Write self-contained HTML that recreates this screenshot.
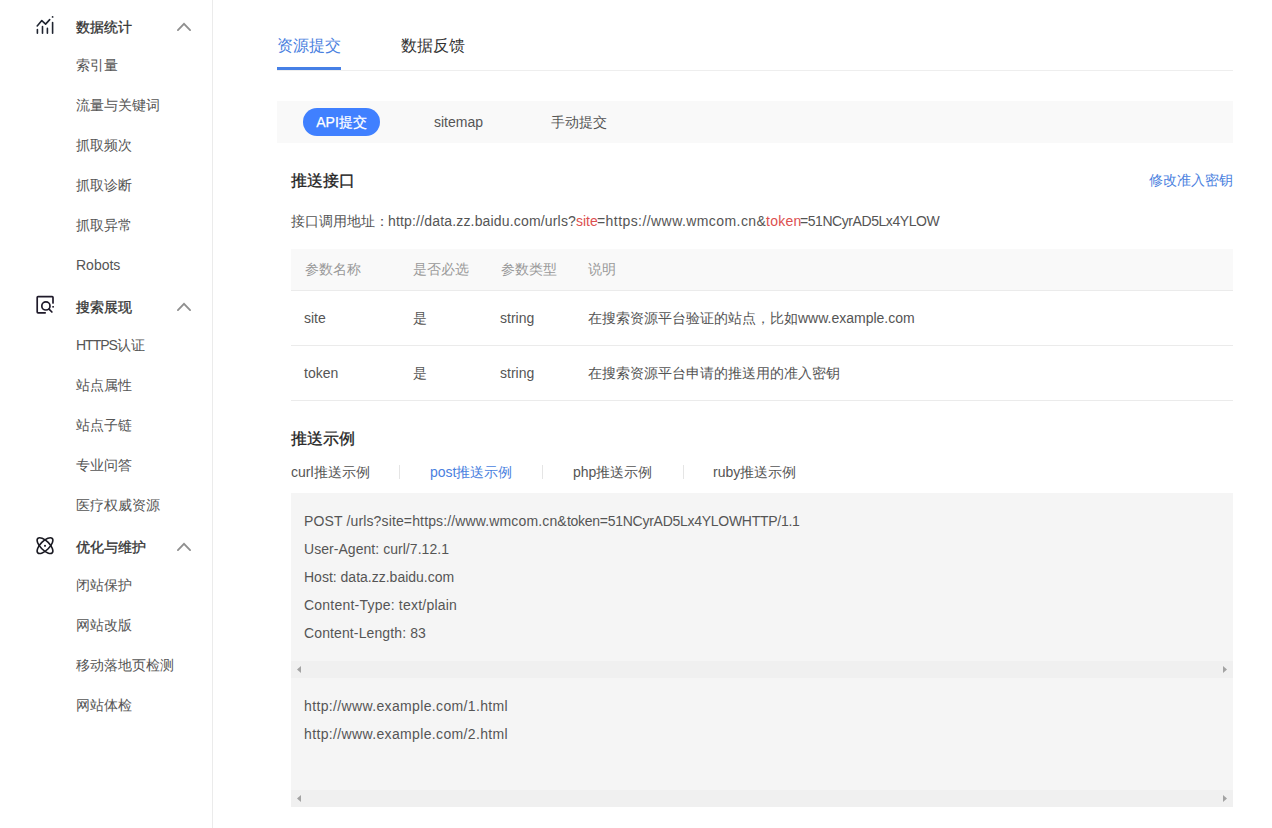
<!DOCTYPE html>
<html><head><meta charset="utf-8">
<style>
*{margin:0;padding:0;box-sizing:border-box}
html,body{width:1272px;height:828px;overflow:hidden;background:#fff}
body{font-family:"Liberation Sans",sans-serif;font-size:14px;color:#333;position:relative}
.abs{position:absolute;white-space:nowrap}
.side{position:absolute;left:0;top:0;width:213px;height:828px;border-right:1px solid #ebebeb}
.sh{position:absolute;left:76px;font-weight:500;-webkit-text-stroke:0.3px currentColor;color:#333;font-size:14px;line-height:20px}
.si{position:absolute;left:76px;color:#555;font-size:14px;line-height:20px}
.chev{position:absolute;left:176px;width:16px;height:10px}
.ico{position:absolute;left:34px;width:22px;height:22px}
.t16{font-size:16px;line-height:22px}
.gray{color:#555}
.blue{color:#4a7fe0}
.red{color:#dc5050}
.code{left:304px;line-height:28px}
</style></head><body>
<div class="side">
  <svg class="ico" style="top:14px" viewBox="0 0 22 22" fill="none" stroke="#1f2430" stroke-width="1.6" stroke-linecap="round" stroke-linejoin="round">
    <path d="M3.4 15.5V19.3M8.5 12.6V19.3M13.4 14.4V19.3M18.6 8.6V19.3"/>
    <path d="M3.2 11.9L7.8 6.6L11.6 10.1L15.7 5.6"/>
    <circle cx="18.6" cy="2.9" r="0.9" fill="#1f2430" stroke="none"/>
  </svg>
  <div class="sh" style="top:17px">数据统计</div>
  <svg class="chev" style="top:22px" viewBox="0 0 16 10" fill="none" stroke="#8f8f8f" stroke-width="1.8" stroke-linecap="round"><path d="M1.9 8.1L8 1.8L14.1 8.1"/></svg>
  <div class="si" style="top:55px">索引量</div>
  <div class="si" style="top:95px">流量与关键词</div>
  <div class="si" style="top:135px">抓取频次</div>
  <div class="si" style="top:175px">抓取诊断</div>
  <div class="si" style="top:215px">抓取异常</div>
  <div class="si" style="top:255px">Robots</div>

  <svg class="ico" style="top:295px" viewBox="0 0 22 22" fill="none" stroke="#1f1a2a" stroke-width="1.7" stroke-linecap="round" stroke-linejoin="round">
    <path d="M11.2 17.8H4Q3.2 17.8 3.2 17V2.5Q3.2 1.7 4 1.7H18.2Q19 1.7 19 2.5V8"/>
    <circle cx="11.9" cy="10.9" r="4.1"/>
    <path d="M15 14.1L17.9 17"/>
    <rect x="18.3" y="11" width="1.6" height="1.6" fill="#1f1a2a" stroke="none"/>
  </svg>
  <div class="sh" style="top:297px">搜索展现</div>
  <svg class="chev" style="top:302px" viewBox="0 0 16 10" fill="none" stroke="#8f8f8f" stroke-width="1.8" stroke-linecap="round"><path d="M1.9 8.1L8 1.8L14.1 8.1"/></svg>
  <div class="si" style="top:335px"><span style="letter-spacing:-1px">HTTPS</span>认证</div>
  <div class="si" style="top:375px">站点属性</div>
  <div class="si" style="top:415px">站点子链</div>
  <div class="si" style="top:455px">专业问答</div>
  <div class="si" style="top:495px">医疗权威资源</div>

  <svg class="ico" style="top:535px" viewBox="0 0 22 22" fill="none" stroke="#1a1a22" stroke-width="1.6">
    <ellipse cx="11" cy="10.6" rx="10.2" ry="4.5" transform="rotate(45 11 10.6)"/>
    <ellipse cx="11" cy="10.6" rx="10.2" ry="4.5" transform="rotate(-45 11 10.6)"/>
    <rect x="10.1" y="9.9" width="1.8" height="1.8" fill="#1a1a22" stroke="none"/>
  </svg>
  <div class="sh" style="top:537px">优化与维护</div>
  <svg class="chev" style="top:542px" viewBox="0 0 16 10" fill="none" stroke="#8f8f8f" stroke-width="1.8" stroke-linecap="round"><path d="M1.9 8.1L8 1.8L14.1 8.1"/></svg>
  <div class="si" style="top:575px">闭站保护</div>
  <div class="si" style="top:615px">网站改版</div>
  <div class="si" style="top:655px">移动落地页检测</div>
  <div class="si" style="top:695px">网站体检</div>
</div>

<!-- top tabs -->
<div class="abs t16 blue" style="left:277px;top:35px">资源提交</div>
<div class="abs t16" style="left:401px;top:35px;color:#333">数据反馈</div>
<div class="abs" style="left:277px;top:70px;width:956px;height:1px;background:#eeeeee"></div>
<div class="abs" style="left:277px;top:67px;width:64px;height:3px;background:#4680e6"></div>

<!-- sub tabs -->
<div class="abs" style="left:277px;top:101px;width:956px;height:42px;background:#f9f9f9"></div>
<div class="abs" style="left:303px;top:108px;width:77px;height:28px;border-radius:14px;background:#4080ff;color:#fff;text-align:center;line-height:28px;-webkit-text-stroke:0.25px #fff">API提交</div>
<div class="abs gray" style="left:434px;top:112px;line-height:20px">sitemap</div>
<div class="abs gray" style="left:551px;top:112px;line-height:20px">手动提交</div>

<!-- push api -->
<div class="abs t16" style="left:291px;top:170px;font-weight:500;-webkit-text-stroke:0.3px currentColor;color:#222">推送接口</div>
<div class="abs blue" style="left:1149px;top:170px;line-height:20px">修改准入密钥</div>
<div class="abs gray" style="left:291px;top:211px;line-height:20px">接口调用地址：</div>
<div class="abs gray" id="pB" style="left:388px;top:211px;line-height:20px;letter-spacing:0.172px">http://data.zz.baidu.com/urls?</div>
<div class="abs red" id="pC" style="left:576px;top:211px;line-height:20px;letter-spacing:0px">site</div>
<div class="abs gray" id="pD" style="left:597px;top:211px;line-height:20px;letter-spacing:0.429px">=https://www.wmcom.cn&amp;</div>
<div class="abs red" id="pE" style="left:766px;top:211px;line-height:20px;letter-spacing:0.25px">token</div>
<div class="abs gray" id="pF" style="left:800px;top:211px;line-height:20px;letter-spacing:-0.438px">=51NCyrAD5Lx4YLOW</div>

<!-- table -->
<div class="abs" style="left:291px;top:249px;width:942px;height:41px;background:#f9f9f9"></div>
<div class="abs" style="left:291px;top:290px;width:942px;height:1px;background:#ebebeb"></div>
<div class="abs" style="left:291px;top:345px;width:942px;height:1px;background:#ebebeb"></div>
<div class="abs" style="left:291px;top:400px;width:942px;height:1px;background:#ebebeb"></div>
<div class="abs" style="left:305px;top:259px;line-height:20px;color:#999">参数名称</div>
<div class="abs" style="left:413px;top:259px;line-height:20px;color:#999">是否必选</div>
<div class="abs" style="left:501px;top:259px;line-height:20px;color:#999">参数类型</div>
<div class="abs" style="left:588px;top:259px;line-height:20px;color:#999">说明</div>

<div class="abs gray" style="left:304px;top:308px;line-height:20px">site</div>
<div class="abs gray" style="left:413px;top:308px;line-height:20px">是</div>
<div class="abs gray" style="left:500px;top:308px;line-height:20px">string</div>
<div class="abs gray" style="left:588px;top:308px;line-height:20px">在搜索资源平台验证的站点，比如www.example.com</div>

<div class="abs gray" style="left:304px;top:363px;line-height:20px">token</div>
<div class="abs gray" style="left:413px;top:363px;line-height:20px">是</div>
<div class="abs gray" style="left:500px;top:363px;line-height:20px">string</div>
<div class="abs gray" style="left:588px;top:363px;line-height:20px">在搜索资源平台申请的推送用的准入密钥</div>

<!-- examples -->
<div class="abs t16" style="left:291px;top:428px;font-weight:500;-webkit-text-stroke:0.3px currentColor;color:#222">推送示例</div>
<div class="abs gray" style="left:291px;top:462px;line-height:20px">curl推送示例</div>
<div class="abs" style="left:399px;top:465px;width:1px;height:14px;background:#e5e5e5"></div>
<div class="abs blue" style="left:430px;top:462px;line-height:20px">post推送示例</div>
<div class="abs" style="left:542px;top:465px;width:1px;height:14px;background:#e5e5e5"></div>
<div class="abs gray" style="left:573px;top:462px;line-height:20px">php推送示例</div>
<div class="abs" style="left:683px;top:465px;width:1px;height:14px;background:#e5e5e5"></div>
<div class="abs gray" style="left:713px;top:462px;line-height:20px">ruby推送示例</div>

<!-- code -->
<div class="abs" style="left:291px;top:493px;width:942px;height:314px;background:#f5f5f5"></div>
<div class="abs" style="left:291px;top:661px;width:942px;height:17px;background:#f0f0f0"></div>
<div class="abs" style="left:291px;top:790px;width:942px;height:17px;background:#f0f0f0"></div>
<svg class="abs" style="left:296px;top:665px" width="6" height="9"><path d="M1 4.5L5 1V8Z" fill="#a3a3a3"/></svg>
<svg class="abs" style="left:1222px;top:665px" width="6" height="9"><path d="M5 4.5L1 1V8Z" fill="#a3a3a3"/></svg>
<svg class="abs" style="left:296px;top:794px" width="6" height="9"><path d="M1 4.5L5 1V8Z" fill="#a3a3a3"/></svg>
<svg class="abs" style="left:1222px;top:794px" width="6" height="9"><path d="M5 4.5L1 1V8Z" fill="#a3a3a3"/></svg>
<div class="abs gray code" id="c1a" style="left:304px;top:507px;letter-spacing:0.139px">POST /urls?site=https://www.wmcom.cn&amp;</div>
<div class="abs gray code" id="c1b" style="left:567px;top:507px;letter-spacing:-0.276px">token=51NCyrAD5Lx4YLOWHTTP/1.1</div>
<div class="abs gray code" id="c2" style="left:304px;top:535px;letter-spacing:0.045px">User-Agent: curl/7.12.1</div>
<div class="abs gray code" id="c3" style="left:304px;top:563px;letter-spacing:0px">Host: data.zz.baidu.com</div>
<div class="abs gray code" id="c4" style="left:304px;top:591px;letter-spacing:0.217px">Content-Type: text/plain</div>
<div class="abs gray code" id="c5" style="left:304px;top:619px;letter-spacing:0.118px">Content-Length: 83</div>
<div class="abs gray code" id="c6" style="left:304px;top:692px;letter-spacing:0.357px">http://www.example.com/1.html</div>
<div class="abs gray code" id="c7" style="left:304px;top:720px;letter-spacing:0.357px">http://www.example.com/2.html</div>
</body></html>
